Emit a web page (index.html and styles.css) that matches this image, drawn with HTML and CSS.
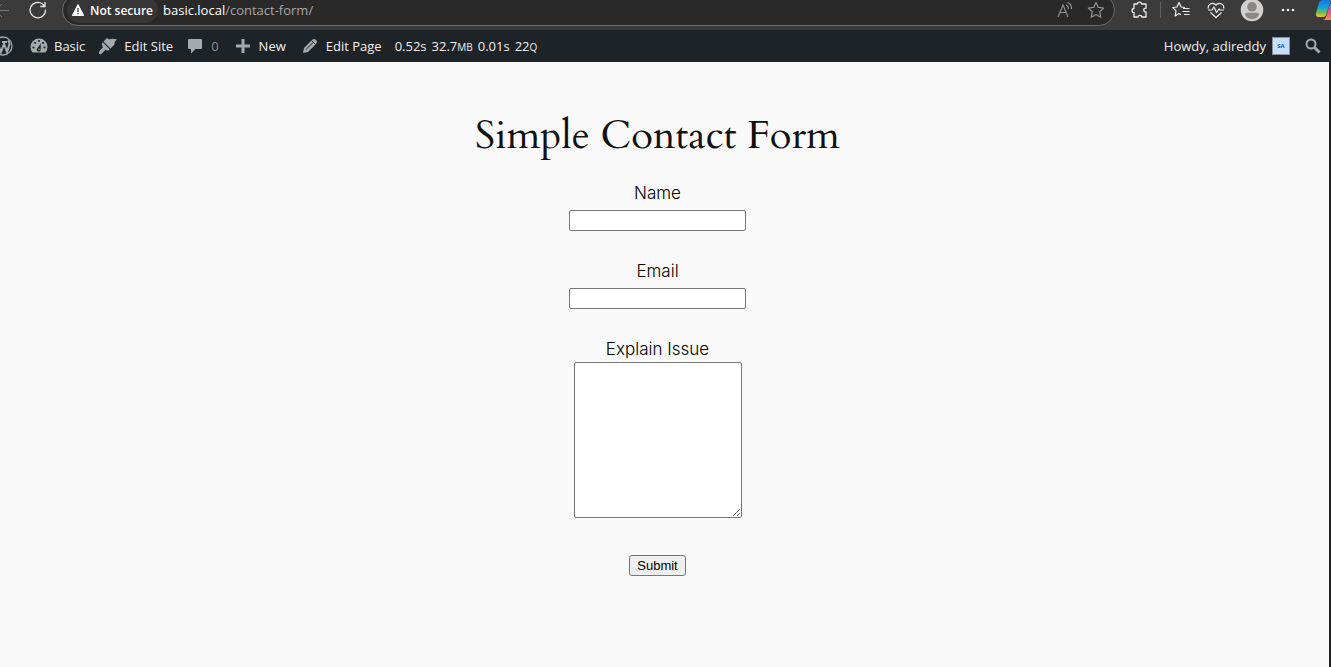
FILE: index.html
```html
<!DOCTYPE html>
<html lang="en">
<head>
<meta charset="utf-8">
<title>Simple Contact Form</title>
<link rel="stylesheet" href="styles.css">
</head>
<body>
<header class="browser">
  <div class="browser-row">
    <button class="tool back" aria-label="Back"><svg width="16" height="16" viewBox="0 0 16 16" fill="none" stroke="#777"><path d="M2 8.500H15M8 2L1.500 8.500L8 15"/></svg></button>
    <button class="tool reload" aria-label="Reload"><svg width="18" height="18" viewBox="0 0 18 18" fill="none" stroke="#e8e8e8" stroke-width="1.300"><path d="M16.500 8.500A7.700 7.700 0 1 1 13.500 3L16 5.200M16 1V5.500H11.300"/></svg></button>
    <div class="address">
      <button class="security"><svg width="12" height="12" viewBox="0 0 12 12"><path d="M6 .5L11.700 11.500H.3Z" fill="#fff" stroke="#fff" stroke-linejoin="round"/><path d="M6 4V8M6 9V10.200" stroke="#333" stroke-width="1.200"/></svg>Not secure</button>
      <span class="url"><span class="host">basic.local</span>/contact-form/</span>
      <button class="tool read" aria-label="Read aloud"><svg width="16" height="18" viewBox="0 0 16 18" fill="none" stroke="#929292" stroke-width="1.100"><path d="M1 16L6 4L11 16M3 11.500H9M9 4Q11.500 5 11.500 8M10.500 1.500Q15 3.500 14.500 8"/></svg></button>
      <button class="tool" aria-label="Add to favorites"><svg width="18" height="18" viewBox="0 0 18 18" fill="none" stroke="#929292" stroke-width="1.200" stroke-linejoin="round"><path d="M9 1.500L11.300 6.400L16.700 7L12.700 10.700L13.800 16.200L9 13.500L4.200 16.200L5.300 10.700L1.300 7L6.700 6.400Z"/></svg></button>
    </div>
    <button class="tool ext" aria-label="Extensions"><svg width="18" height="18" viewBox="0 0 18 18" fill="none" stroke="#eee" stroke-width="1.300" stroke-linejoin="round"><path d="M3 3H6.500C6.500 .5 10.500 .5 10.500 3H15V7.200C12 7.200 12 11 15 11V16H10.800C10.800 13.800 7 13.800 7 16H3V11.500C.4 11.500 .4 7.500 3 7.500Z"/></svg></button>
    <span class="divider"></span>
    <button class="tool" aria-label="Favorites"><svg width="18" height="18" viewBox="0 0 18 18" fill="none" stroke="#eee" stroke-width="1.200" stroke-linejoin="round"><path d="M13 6.500L9.200 6L7 1.500L4.900 6L.8 6.500L4 9.800L3.200 15L7 12.500L9 13.700M11 7.500H17.500M10.500 10.500H17.500M12 13.500H17.500"/></svg></button>
    <button class="tool health" aria-label="Browser essentials"><svg width="18" height="18" viewBox="0 0 18 18" fill="none" stroke="#eee" stroke-width="1.200" stroke-linejoin="round"><path d="M1.300 7.500C.5 3 6 .5 9 4C12 .5 17.500 3 16.700 7.500M1 9H5L7 6L9.500 11.500L12 8L13 9H17M3.500 11.500L9 16.500L14.500 11.500"/></svg></button>
    <button class="tool" aria-label="Profile"><svg width="24" height="24" viewBox="0 0 24 24"><circle cx="12" cy="12" r="11.300" fill="#d2d0ce"/><circle cx="12" cy="8.800" r="4.800" fill="#8a8886"/><path d="M5 16.500Q5 14.700 7 14.700H17Q19 14.700 19 16.500Q17 21 12 21Q7 21 5 16.500Z" fill="#8a8886"/></svg></button>
    <button class="tool more" aria-label="Settings and more"><svg width="14" height="4" viewBox="0 0 14 4" fill="#eee"><circle cx="2" cy="2" r="1.300"/><circle cx="7" cy="2" r="1.300"/><circle cx="12" cy="2" r="1.300"/></svg></button>
    <button class="tool copilot" aria-label="Copilot"><svg width="24" height="24" viewBox="0 0 24 24"><defs><linearGradient id="cool" x2="0" y2="1"><stop stop-color="#1476de"/><stop offset=".45" stop-color="#16a3dd"/><stop offset=".72" stop-color="#65bd54"/><stop offset="1" stop-color="#ffc12e"/></linearGradient><linearGradient id="warm" x2="0" y2="1"><stop stop-color="#a958e8"/><stop offset=".55" stop-color="#ed4e92"/><stop offset="1" stop-color="#ff9345"/></linearGradient></defs><path d="M7 2H16L11 17Q10 19 8 19H4Q0 19 1 15L4 5Q5 2 7 2Z" fill="url(#cool)"/><path d="M15 6H20Q24 6 23 10L20 19Q19 22 16 22H7Q10 22 11 19Z" fill="url(#warm)"/></svg></button>
  </div>
</header>
<div class="viewport">
  <nav class="adminbar" aria-label="Toolbar">
    <a class="wp" href="#" aria-label="About WordPress"><svg width="20" height="20" viewBox="0 0 20 20" fill="none" stroke="#a7aaad"><circle cx="10" cy="10" r="9" stroke-width="1.300"/><path d="M2.500 6H7M9 6H14M4.200 6L8 16L10.700 8.500M10.500 6L14 16L16.500 8Q16.500 6 15 4.500" stroke-width="2"/></svg></a>
    <a href="#" class="site"><svg width="18" height="18" viewBox="0 0 18 18"><path d="M2.500 15.500Q.5 13 .5 10A8.500 8.500 0 0 1 17.500 10Q17.500 13 15.500 15.500Z" fill="#a7aaad"/><g fill="#1d2327"><circle cx="3.500" cy="10.500" r="1.100"/><circle cx="5" cy="6" r="1.100"/><circle cx="9" cy="4" r="1.100"/><circle cx="13" cy="6" r="1.100"/><circle cx="14.500" cy="10.500" r="1.100"/><path d="M10.800 6.500L10.700 12.500A2 2 0 1 1 7.500 11Z"/></g><circle cx="9" cy="12.300" r=".8" fill="#a7aaad"/></svg>Basic</a>
    <a href="#" class="edit-site"><svg width="20" height="18" viewBox="0 0 20 18" fill="#a7aaad"><path d="M5.500 4.500L9 1L11 2.500Q14 .8 19 2.500Q16.300 4 16.500 7.500L12.500 11.500Z"/><path d="M4.700 5.300L11.700 12.300L10 13.700L7.500 12.700L3.500 16.700Q1.500 18 .8 16Q.6 14.500 5 10.200L3.700 7.200Z"/></svg>Edit Site</a>
    <a href="#" class="comments"><svg width="16" height="16" viewBox="0 0 16 16"><path d="M2 1H14Q15 1 15 2V10Q15 11 14 11H8.500L4 15.500V11H2Q1 11 1 10V2Q1 1 2 1Z" fill="#a7aaad"/></svg>0</a>
    <a href="#" class="new"><svg width="14" height="14" viewBox="0 0 14 14"><path d="M5.500 0H8.500V5.500H14V8.500H8.500V14H5.500V8.500H0V5.500H5.500Z" fill="#a7aaad"/></svg>New</a>
    <a href="#" class="edit-page"><svg width="16" height="16" viewBox="0 0 16 16"><path d="M10 2Q12 0 14 2Q16 4 14 6L6 14L1 15L2 10Z" fill="#a7aaad"/><path d="M4 11.500L11 4.500M9.500 2.500L13.500 6.500" stroke="#1d2327"/></svg>Edit Page</a>
    <a href="#" class="stats"><span>0.52s</span><span>32.7<small>MB</small></span><span>0.01s</span><span>22<small>Q</small></span></a>
    <a href="#" class="account">Howdy, adireddy<span class="avatar">SA</span></a>
    <a href="#" class="search" aria-label="Search"><svg width="16" height="16" viewBox="0 0 16 16" fill="none" stroke="#a7aaad"><circle cx="6" cy="6" r="4.500" stroke-width="2"/><path d="M9.500 9.500L14.500 14.500" stroke-width="3"/></svg></a>
  </nav>
  <main class="page">
    <h1 class="title">Simple Contact Form</h1>
    <form class="form">
      <div class="field"><label for="name">Name</label><input id="name" type="text"></div>
      <div class="field"><label for="email">Email</label><input id="email" type="email"></div>
      <div class="field message"><label for="issue">Explain Issue</label><textarea id="issue"></textarea></div>
      <button class="submit" type="submit">Submit</button>
    </form>
  </main>
</div>
</body>
</html>
```
FILE: styles.css
```css
* { box-sizing: border-box; }
body {
  margin: 0;
  min-height: 100vh;
  display: flex;
  flex-direction: column;
  background: #f9f9f9;
  color: #111;
  font-family: Inter, sans-serif;
}
svg { display: block; flex: none; }

.browser {
  height: 30px;
  display: flex;
  align-items: flex-end;
  overflow: hidden;
  background: #3b3b3b;
  font: 13px "Open Sans", "Noto Sans", sans-serif;
}
.browser-row {
  flex: 1;
  min-width: 0;
  height: 40px;
  display: flex;
  align-items: center;
}
.tool { flex: none; border: 0; padding: 0; background: none; }
.back { margin-left: -6px; }
.reload { margin: 0 15px 0 19px; }
.address {
  flex: 1;
  height: 32px;
  display: flex;
  align-items: center;
  padding: 0 9px 0 4px;
  border: 1px solid #6b6b6b;
  border-radius: 16px;
  background: #292929;
}
.security {
  height: 26px;
  display: flex;
  align-items: center;
  gap: 6px;
  padding: 0 5px;
  border: 0;
  border-radius: 13px;
  background: #363636;
  color: #fff;
  font: 600 12px "Open Sans", sans-serif;
}
.url { flex: 1; margin-left: 5px; color: #a6a6a6; }
.host { color: #fff; }
.read { margin-right: 14px; }
.ext { margin: 0 11px 0 16px; }
.divider { width: 1px; height: 16px; margin-right: 11px; background: #626262; }
.health { margin: 0 15px 0 17px; }
.more { margin: 0 20px 0 17px; }
.copilot { margin-right: -8px; }

.viewport {
  flex: 1;
  display: flex;
  flex-direction: column;
  border-right: 2px solid #222;
}
.adminbar {
  height: 32px;
  display: flex;
  align-items: center;
  background: #1d2327;
  font: 13px "Open Sans", "Noto Sans", sans-serif;
}
.adminbar a {
  display: flex;
  align-items: center;
  gap: 6px;
  color: #f0f0f1;
  text-decoration: none;
  white-space: nowrap;
}
.wp { margin-left: -7px; }
.site { margin-left: 17px; }
.edit-site { margin-left: 13px; }
.adminbar .comments { margin-left: 14px; gap: 8px; color: #8c8f94; }
.adminbar .new { margin-left: 17px; gap: 9px; }
.adminbar .edit-page { margin-left: 16px; gap: 8px; }
.adminbar .stats { margin-left: 13px; gap: 5px; }
.stats small { font-size: 10px; }
.adminbar .account { margin-left: auto; }
.avatar {
  width: 18px;
  height: 18px;
  border: 1px solid #8c8f94;
  background: #c5deff;
  color: #2455c3;
  font-size: 6px;
  font-weight: 700;
  line-height: 16px;
  text-align: center;
}
.search { margin: 0 8px 0 15px; }

.page {
  display: flex;
  flex-direction: column;
  align-items: center;
  padding: 50px 14px 48px 0;
}
.title {
  margin: 0 0 20px;
  font: 400 40px/48px Cardo, "EB Garamond", "Liberation Serif", serif;
}
.form {
  display: flex;
  flex-direction: column;
  align-items: center;
  gap: 27px;
  font-size: 17px;
  font-weight: 300;
  line-height: 26px;
}
.field { display: flex; flex-direction: column; align-items: center; gap: 4px; }
.field label { color: #000; }
.field input, .field textarea {
  border: 1px solid #767676;
  border-radius: 2px;
  background: #fff;
}
.field input { width: 177px; height: 21px; }
.message { gap: 0; }
.field textarea { width: 168px; height: 156px; }
.submit {
  margin-top: 10px;
  height: 21px;
  padding: 0 7px;
  border: 1px solid #767676;
  border-radius: 3px;
  background: #efefef;
  color: #000;
  font: 13px "Liberation Sans", Arial, sans-serif;
}
```
